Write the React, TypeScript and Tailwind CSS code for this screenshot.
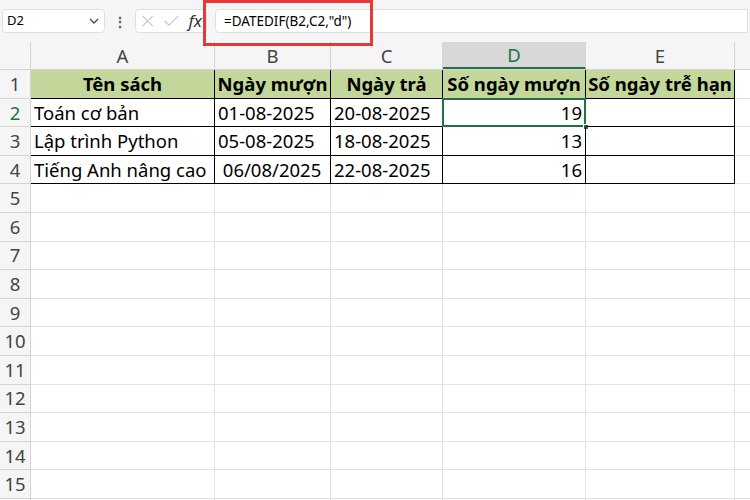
import React from "react";

const cols = [
  { key: "A", w: "w-[184px]" },
  { key: "B", w: "w-[116px]" },
  { key: "C", w: "w-[112px]" },
  { key: "D", w: "w-[143px]" },
  { key: "E", w: "w-[149px]" },
  { key: "F", w: "w-[60px]" },
];

const rows: (string | number)[][] = [
  ["Tên sách", "Ngày mượn", "Ngày trả", "Số ngày mượn", "Số ngày trễ hạn"],
  ["Toán cơ bản", "01-08-2025", "20-08-2025", 19, ""],
  ["Lập trình Python", "05-08-2025", "18-08-2025", 13, ""],
  ["Tiếng Anh nâng cao", " 06/08/2025", "22-08-2025", 16, ""],
];

export default function App() {
  const all = Array.from({ length: 17 }, (_, i) => i + 1);
  return (
    <div className="w-[750px] h-[500px] overflow-hidden bg-white font-['Open_Sans',sans-serif] text-[18.5px] text-black relative">
      {/* formula bar */}
      <div className="h-[42px] bg-[#f5f5f5] flex items-center gap-2 px-[2px]">
        <div className="w-[103px] h-[24px] bg-white rounded border border-[#e0e0e0] flex items-center justify-between px-1 text-[13px]">
          <span>D2</span>
          <svg width="12" height="12" viewBox="0 0 12 12" fill="none" stroke="#444" strokeWidth="1.3"><path d="M2 4l4 4 4-4" /></svg>
        </div>
        <span className="text-[#555] text-[14px] font-bold">⋮</span>
        <div className="w-[72px] h-[24px] bg-white rounded border border-[#e0e0e0] flex items-center gap-2 px-1">
          <svg width="18" height="18" viewBox="0 0 18 18" stroke="#c4c4c4" strokeWidth="1.3"><path d="M3 3l12 12M15 3L3 15" /></svg>
          <svg width="20" height="18" viewBox="0 0 20 18" fill="none" stroke="#c4c4c4" strokeWidth="1.3"><path d="M2 9l5 5 11-11" /></svg>
          <span className="italic text-[#333] font-['Liberation_Serif',serif] text-[17px]">fx</span>
        </div>
        <div className="flex-1 h-[24px] bg-white rounded-l border border-[#e0e0e0] flex items-center px-2 text-[13.5px]">=DATEDIF(B2,C2,"d")</div>
      </div>
      <div className="absolute left-[203px] top-0 w-[170px] h-[46px] border-[3px] border-[#e53935]" />
      {/* column headers */}
      <div className="flex h-[28px] bg-[#f5f5f5] border-b border-[#d4d4d4]">
        <div className="w-[31px] shrink-0 border-r border-[#d4d4d4]" />
        {cols.map((c) => (
          <div key={c.key} className={`${c.w} shrink-0 flex items-center justify-center border-r border-[#d4d4d4] ${c.key === "D" ? "bg-[#d8d8d8] text-[#217346] border-b-2 border-b-[#217346]" : "text-[#444]"}`}>{c.key === "F" ? "" : c.key}</div>
        ))}
      </div>
      {all.map((r) => {
        const data = rows[r - 1];
        return (
          <div key={r} className="flex h-[28.6px]">
            <div className={`w-[31px] shrink-0 flex items-center justify-center bg-[#f5f5f5] border-r border-b border-[#d4d4d4] ${r === 2 ? "text-[#217346] bg-[#d8d8d8]" : "text-[#444]"}`}>{r}</div>
            {cols.map((c, ci) => {
              const v = data && ci < 5 ? data[ci] : undefined;
              const inTable = !!data && ci < 5;
              const isNum = typeof v === "number";
              const sel = r === 2 && c.key === "D";
              return (
                <div
                  key={c.key}
                  className={`${c.w} shrink-0 flex items-center px-[3px] whitespace-pre overflow-visible relative ${
                    inTable ? "border-r border-b border-black" : "border-r border-b border-[#e1e1e1]"
                  } ${r === 1 && inTable ? "bg-[#c4d79b] font-bold justify-center" : ""} ${isNum ? "justify-end" : ""}`}
                >
                  {v}
                  {sel && (
                    <>
                      <div className="absolute inset-[-1px] border-2 border-[#217346]" />
                      <div className="absolute right-[-4px] bottom-[-4px] w-[6px] h-[6px] bg-[#217346] border border-white" />
                    </>
                  )}
                </div>
              );
            })}
          </div>
        );
      })}
    </div>
  );
}
